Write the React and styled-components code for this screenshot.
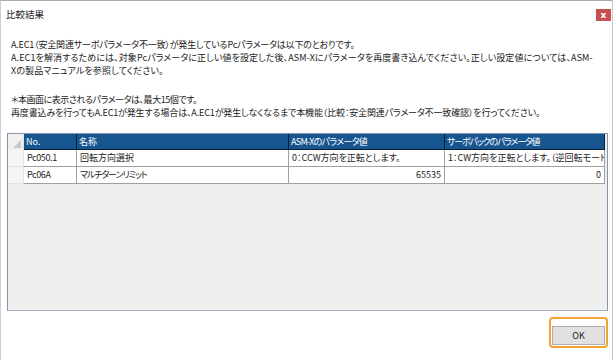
import React from "react";
import styled, { createGlobalStyle } from "styled-components";

const Global = createGlobalStyle`
  html, body { margin: 0; padding: 0; background: #ffffff; }
  body { font-family: "Noto Sans CJK JP", "Noto Sans", sans-serif; color: #1e1e1e; }
`;

const Dialog = styled.div`
  box-sizing: border-box;
  width: 613px;
  height: 360px;
  border-top: 1px solid #a9a9a9;
  border-left: 1px solid #cfcfcf;
  border-right: 1px solid #c6c6c6;
  background: #ffffff;
  display: flex;
  flex-direction: column;
`;

const TitleBar = styled.div`
  height: 29px;
  display: flex;
  align-items: flex-start;
  justify-content: space-between;
  padding: 6px 1px 0 5px;
  box-sizing: border-box;
`;

const Title = styled.span`
  font-size: 9.5px;
  line-height: 14px;
  color: #222;
`;

const CloseButton = styled.div`
  width: 15px;
  height: 12px;
  margin-top: 2px;
  background: #c75050;
  color: #fff;
  font-family: "DejaVu Sans", sans-serif;
  font-size: 9px;
  font-weight: bold;
  line-height: 12px;
  text-align: center;
`;

const Body = styled.div`
  flex: 1;
  display: flex;
  flex-direction: column;
  padding: 8px 4px 12px 6px;
  min-height: 0;
`;

const Message = styled.div`
  padding-left: 4px;
  font-size: 9px;
  line-height: 13px;
  color: #222;
  white-space: nowrap;
  font-feature-settings: "palt";
`;

const Paragraph = styled.p`
  margin: 0 0 ${(p) => p.$gap || 0}px 0;
  letter-spacing: ${(p) => p.$ls || 0}px;
`;

const GridBox = styled.div`
  margin-top: 14px;
  flex: 1;
  border: 1px solid #8396ad;
  border-bottom-color: #a3adbb;
  background: #efefef;
  overflow: hidden;
`;

const Row = styled.div`
  display: grid;
  grid-template-columns: 16px 53px 212px 156px 160px;
  height: ${(p) => p.$h}px;
`;

const Corner = styled.div`
  background: #f0f0f0;
  position: relative;
  border-right: 1px solid #e0e0e0;
  &::after {
    content: "";
    position: absolute;
    right: 2px;
    bottom: 2px;
    border-style: solid;
    border-width: 0 0 8px 8px;
    border-color: transparent transparent #c8c8c8 transparent;
  }
`;

const HeadCell = styled.div`
  background: #16558f;
  color: #ffffff;
  font-size: 9px;
  line-height: 15px;
  padding-left: 2px;
  border-right: 1px solid #0b1c2e;
  border-bottom: 1px solid #0b1c2e;
  white-space: nowrap;
  overflow: hidden;
  font-feature-settings: "palt";
  letter-spacing: ${(p) => p.$ls || 0}px;
`;

const RowHeader = styled.div`
  background: #f5f5f5;
  border-right: 1px solid #e2e2e2;
  border-bottom: 1px solid #e2e2e2;
`;

const Cell = styled.div`
  background: #ffffff;
  font-size: 9px;
  line-height: 16px;
  padding: 0 3px;
  border-right: 1px solid #a0a0a0;
  border-bottom: 1px solid #a0a0a0;
  white-space: nowrap;
  overflow: hidden;
  text-align: ${(p) => (p.$num ? "right" : "left")};
  color: #222;
  font-feature-settings: "palt";
  letter-spacing: ${(p) => p.$ls || 0}px;
`;

const Footer = styled.div`
  display: flex;
  justify-content: flex-end;
  padding-top: 6px;
`;

const OkFocus = styled.div`
  border: 2px solid #f3a334;
  border-radius: 4px;
  padding: 1px;
`;

const OkButton = styled.button`
  width: 53px;
  height: 19px;
  background: #e1e1e1;
  border: 1px solid #adadad;
  font-family: "Noto Sans CJK JP", sans-serif;
  font-size: 9px;
  color: #222;
  padding: 0;
  line-height: 17px;
`;

const rows = [
  {
    no: "Pc050.1",
    name: "回転方向選択",
    nameLs: 0,
    asm: "0：CCW方向を正転とします。",
    servo: "1：CW方向を正転とします。（逆回転モード）",
    num: false,
  },
  {
    no: "Pc06A",
    name: "マルチターンリミット",
    nameLs: -1.1,
    asm: "65535",
    servo: "0",
    num: true,
  },
];

export default function App() {
  return (
    <>
      <Global />
      <Dialog>
        <TitleBar>
          <Title>比較結果</Title>
          <CloseButton>x</CloseButton>
        </TitleBar>
        <Body>
          <Message>
            <Paragraph $ls={-0.18}>A.EC1（安全関連サーボパラメータ不一致）が発生しているPcパラメータは以下のとおりです。</Paragraph>
            <Paragraph $ls={0.1}>A.EC1を解消するためには、対象Pcパラメータに正しい値を設定した後、ASM-Xにパラメータを再度書き込んでください。正しい設定値については、ASM-</Paragraph>
            <Paragraph $ls={0.12} $gap={16}>Xの製品マニュアルを参照してください。</Paragraph>
            <Paragraph $ls={-0.45}>＊本画面に表示されるパラメータは、最大15個です。</Paragraph>
            <Paragraph $ls={-0.14}>再度書込みを行ってもA.EC1が発生する場合は、A.EC1が発生しなくなるまで本機能（比較：安全関連パラメータ不一致確認）を行ってください。</Paragraph>
          </Message>
          <GridBox>
            <Row $h={16}>
              <Corner />
              <HeadCell>No.</HeadCell>
              <HeadCell>名称</HeadCell>
              <HeadCell $ls={-0.7}>ASM-Xのパラメータ値</HeadCell>
              <HeadCell $ls={-1.2}>サーボパックのパラメータ値</HeadCell>
            </Row>
            {rows.map((r) => (
              <Row $h={17} key={r.no}>
                <RowHeader />
                <Cell $ls={-0.4}>{r.no}</Cell>
                <Cell $ls={r.nameLs}>{r.name}</Cell>
                <Cell $num={r.num}>{r.asm}</Cell>
                <Cell $num={r.num}>{r.servo}</Cell>
              </Row>
            ))}
          </GridBox>
          <Footer>
            <OkFocus>
              <OkButton>OK</OkButton>
            </OkFocus>
          </Footer>
        </Body>
      </Dialog>
    </>
  );
}
